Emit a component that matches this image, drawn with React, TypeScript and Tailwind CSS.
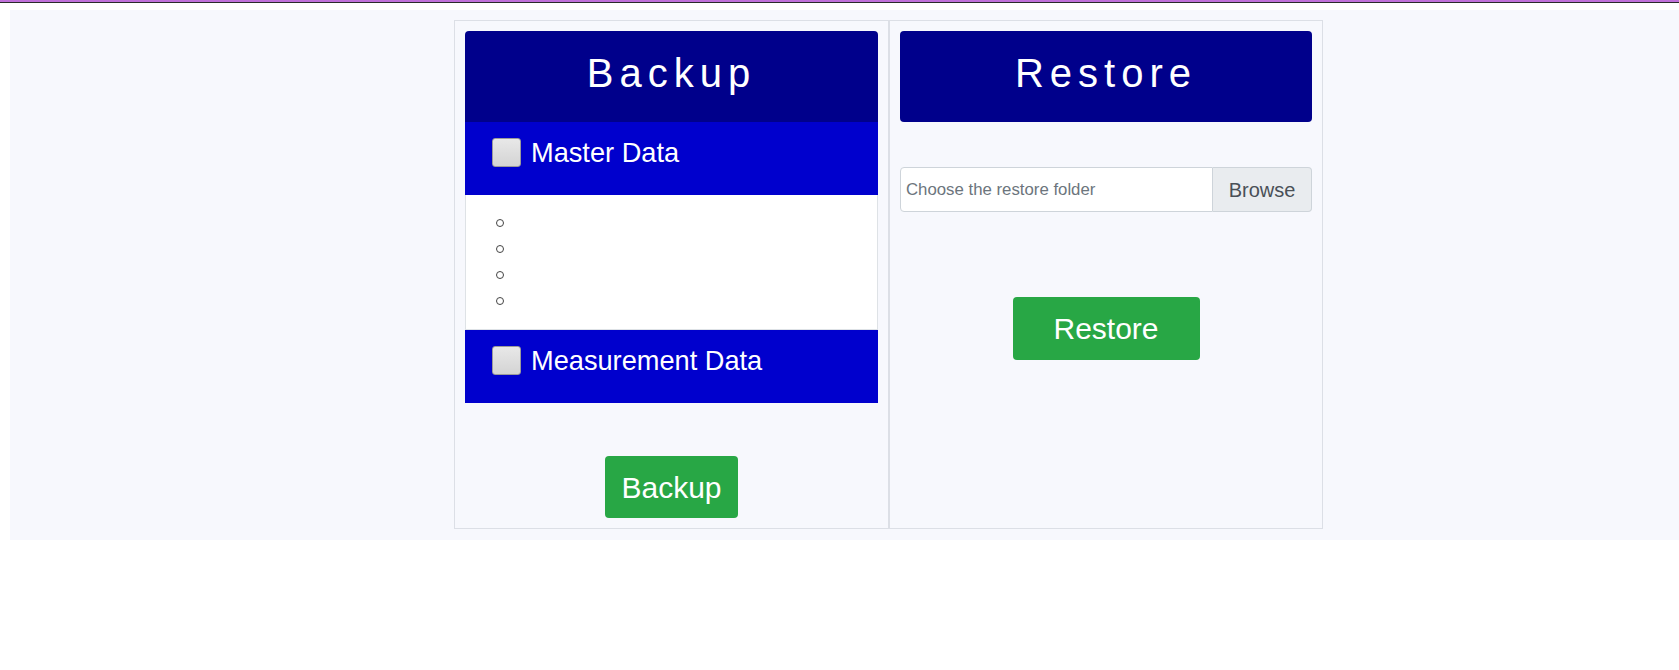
const DataRow = ({ label }: { label: string }) => (
  <div className="h-[73px] bg-[#0000cd] pl-[27px] pt-[15px]">
    <div className="flex h-[31px] items-center gap-[10px]">
      <span className="h-[29px] w-[29px] rounded-[3px] border border-[#9b9b9b] bg-gradient-to-b from-[#e8e8e8] to-[#d4d4d4]"></span>
      <span className="text-[27.2px] leading-[31px] text-white">{label}</span>
    </div>
  </div>
);

const App = () => {
  return (
    <div className="min-h-screen bg-white font-['Liberation_Sans',Arial,sans-serif]">
      {/* top stripe */}
      <div className="h-[2px] bg-[#bf6fd9]"></div>
      <div className="h-px bg-[#2a2a2a]"></div>

      <div className="pl-[10px] pt-[7px]">
        <div className="bg-[#f7f8fd] pb-[11px] pl-[444px] pt-[10px]">
          <div className="flex">
            {/* Backup panel */}
            <div className="flex h-[509px] w-[435px] flex-col border border-[#dcdfe6] p-[10px]">
              <div className="h-[91px] rounded-t-[4px] bg-[#00008b] pt-[19px] text-center text-[40px] leading-[46px] tracking-[6px] text-white">
                Backup
              </div>
              <DataRow label="Master Data" />
              <ul className="h-[135px] border-x border-b border-[#dee2e6] bg-white py-[15px] pl-[30px]">
                {[0, 1, 2, 3].map((i) => (
                  <li key={i} className="flex h-[26px] items-center">
                    <span className="h-[8px] w-[8px] rounded-full border-[1.5px] border-[#444]"></span>
                  </li>
                ))}
              </ul>
              <DataRow label="Measurement Data" />
              <button className="mt-[53px] h-[62px] w-[133px] self-center rounded-[4px] bg-[#28a745] text-[30px] text-white">
                Backup
              </button>
            </div>

            {/* Restore panel */}
            <div className="flex h-[509px] w-[434px] flex-col border border-[#dcdfe6] p-[10px]">
              <div className="h-[91px] rounded-[4px] bg-[#00008b] pt-[19px] text-center text-[40px] leading-[46px] tracking-[6px] text-white">
                Restore
              </div>
              <div className="mt-[45px] flex h-[45px]">
                <input
                  type="text"
                  placeholder="Choose the restore folder"
                  className="min-w-0 flex-1 rounded-l-[4px] border border-[#ced4da] bg-white pl-[5px] text-[16.8px] text-[#495057] outline-none placeholder:text-[#6c757d]"
                />
                <button className="w-[99px] rounded-r-[4px] border border-l-0 border-[#ced4da] bg-[#e9ecef] text-[20px] text-[#495057]">
                  Browse
                </button>
              </div>
              <button className="mt-[85px] h-[63px] w-[187px] self-center rounded-[4px] bg-[#28a745] text-[30px] text-white">
                Restore
              </button>
            </div>
          </div>
        </div>
      </div>
    </div>
  );
};

export default App;
